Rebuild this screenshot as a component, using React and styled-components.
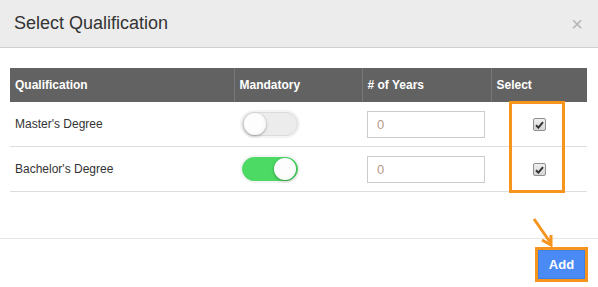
import React from "react";
import styled, { createGlobalStyle } from "styled-components";

const GlobalStyle = createGlobalStyle`
  html, body {
    margin: 0;
    padding: 0;
    background: #fff;
    font-family: "Liberation Sans", Arial, sans-serif;
  }
`;

const rows = [
  { name: "Master's Degree", mandatory: false },
  { name: "Bachelor's Degree", mandatory: true },
];

export default function App() {
  return (
    <>
      <GlobalStyle />
      <Modal>
        <Header>
          <Title>Select Qualification</Title>
          <Close>×</Close>
        </Header>
        <Body>
          <Table>
            <colgroup>
              <col style={{ width: 224 }} />
              <col style={{ width: 128 }} />
              <col style={{ width: 129 }} />
              <col style={{ width: 96 }} />
            </colgroup>
            <thead>
              <tr>
                <Th>Qualification</Th>
                <Th>Mandatory</Th>
                <Th># of Years</Th>
                <Th>Select</Th>
              </tr>
            </thead>
            <tbody>
              {rows.map((r) => (
                <tr key={r.name}>
                  <Td>{r.name}</Td>
                  <Td>
                    <Toggle $on={r.mandatory}>
                      <Knob $on={r.mandatory} />
                    </Toggle>
                  </Td>
                  <Td>
                    <YearsInput placeholder="0" />
                  </Td>
                  <CheckCell>
                    <Check>
                      <svg width="9" height="8" viewBox="0 0 9 8">
                        <path
                          d="M1 4.2 L3.4 6.6 L8 1.2"
                          fill="none"
                          stroke="#333"
                          strokeWidth="2"
                        />
                      </svg>
                    </Check>
                  </CheckCell>
                </tr>
              ))}
            </tbody>
          </Table>
          <Highlight />
        </Body>
        <Footer>
          <Arrow width="28" height="34" viewBox="0 0 28 34">
            <path d="M3 2 L19 25" stroke="#f7941d" strokeWidth="3" fill="none" />
            <path d="M11 23 L20 28 L20 18" stroke="#f7941d" strokeWidth="3" fill="none" />
          </Arrow>
          <AddWrap>
            <AddButton>Add</AddButton>
          </AddWrap>
        </Footer>
      </Modal>
    </>
  );
}

const Modal = styled.div`
  width: 598px;
  height: 287px;
  background: #fff;
  display: flex;
  flex-direction: column;
`;

const Header = styled.div`
  height: 47px;
  background: #ececec;
  border-bottom: 1px solid #cfcfcf;
  display: flex;
  align-items: center;
  justify-content: space-between;
  padding: 0 15px 0 14px;
`;

const Title = styled.h4`
  margin: 0;
  font-size: 18px;
  font-weight: normal;
  color: #333;
`;

const Close = styled.span`
  font-size: 20px;
  color: #b5b5b5;
  line-height: 1;
`;

const Body = styled.div`
  position: relative;
  padding: 20px 11px 46px 10px;
`;

const Table = styled.table`
  width: 577px;
  border-collapse: collapse;
  table-layout: fixed;
`;

const Th = styled.th`
  background: #626262;
  color: #fff;
  font-size: 12px;
  font-weight: bold;
  text-align: left;
  height: 34px;
  padding: 0 5px;
  border-left: 1px solid #777;
  &:first-child {
    border-left: none;
  }
`;

const Td = styled.td`
  height: 44px;
  padding: 0 7px 0 5px;
  font-size: 12px;
  color: #333;
  border-bottom: 1px solid #ddd;
  vertical-align: middle;
`;

const CheckCell = styled(Td)`
  text-align: center;
  padding: 0;
`;

const Toggle = styled.div`
  width: 56px;
  height: 24px;
  margin-left: 3px;
  border-radius: 13px;
  box-sizing: border-box;
  background: ${(p) => (p.$on ? "#4cd964" : "#ececec")};
  border: 1px solid ${(p) => (p.$on ? "#4cd964" : "#dcdcdc")};
  box-shadow: 0 0 0 2px #f4f4f4;
  display: flex;
  align-items: center;
  justify-content: ${(p) => (p.$on ? "flex-end" : "flex-start")};
  padding: 0 1px;
`;

const Knob = styled.div`
  width: 22px;
  height: 22px;
  border-radius: 50%;
  background: radial-gradient(circle at 45% 45%, #fdfdfd 50%, #ececec 100%);
  box-shadow: 0 1px 3px rgba(0, 0, 0, 0.35);
`;

const YearsInput = styled.input`
  width: 118px;
  height: 27px;
  box-sizing: border-box;
  border: 1px solid #ccc;
  padding: 0 9px;
  font-family: "Liberation Sans", Arial, sans-serif;
  font-size: 13px;
  outline: none;
  &::placeholder {
    color: #b59a88;
  }
`;

const Check = styled.span`
  display: inline-flex;
  align-items: center;
  justify-content: center;
  width: 13px;
  height: 13px;
  box-sizing: border-box;
  border: 1px solid #8f8f8f;
  border-radius: 2px;
  background: linear-gradient(#f0f0f0, #d4d4d4);
  vertical-align: middle;
`;

const Highlight = styled.div`
  position: absolute;
  left: 509px;
  top: 53px;
  width: 56px;
  height: 92px;
  box-sizing: border-box;
  border: 3px solid #f7941d;
  pointer-events: none;
`;

const Footer = styled.div`
  position: relative;
  flex: 1;
  border-top: 1px solid #e5e5e5;
  display: flex;
  justify-content: flex-end;
  align-items: flex-start;
  padding: 8px 10px 0 0;
`;

const Arrow = styled.svg`
  position: absolute;
  left: 531px;
  top: -22px;
`;

const AddWrap = styled.div`
  border: 3px solid #f7941d;
  padding: 0;
`;

const AddButton = styled.button`
  width: 47px;
  height: 29px;
  border: 1px solid #3f7fe8;
  background: #4a8af4;
  color: #fff;
  font-family: "Liberation Sans", Arial, sans-serif;
  font-weight: bold;
  font-size: 13px;
  padding: 0;
  display: block;
`;
